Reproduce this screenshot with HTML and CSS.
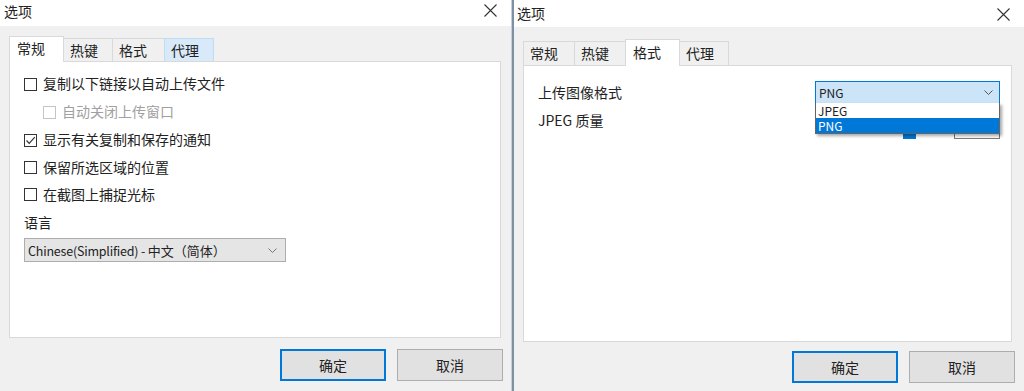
FILE: index.html
```
<!DOCTYPE html>
<html lang="zh-CN">
<head>
    <meta charset="UTF-8">
    <title>选项</title>
    <link rel="stylesheet" href="styles.css">
</head>
<body>
    <div class="dialog dialog-left">
        <div class="titlebar">
            <span class="title">选项</span>
            <svg class="close" width="13" height="13" viewBox="0 0 13 13"><path d="M0.5 0.5 L12.5 12.5 M12.5 0.5 L0.5 12.5" stroke="#333" stroke-width="1.1" fill="none"/></svg>
        </div>
        <div class="body">
            <div class="tabs">
                <div class="tab selected w54">常规</div>
                <div class="tab w49">热键</div>
                <div class="tab w52">格式</div>
                <div class="tab hover w49">代理</div>
            </div>
            <div class="panel">
                <div class="row">
                    <span class="checkbox"></span>
                    <span>复制以下链接以自动上传文件</span>
                </div>
                <div class="row indent disabled">
                    <span class="checkbox"></span>
                    <span>自动关闭上传窗口</span>
                </div>
                <div class="row">
                    <span class="checkbox">
                        <svg width="11" height="11" viewBox="0 0 11 11"><path d="M1.5 5.5 L4.2 8.3 L9.8 2.2" stroke="#333" stroke-width="1.2" fill="none"/></svg>
                    </span>
                    <span>显示有关复制和保存的通知</span>
                </div>
                <div class="row">
                    <span class="checkbox"></span>
                    <span>保留所选区域的位置</span>
                </div>
                <div class="row">
                    <span class="checkbox"></span>
                    <span>在截图上捕捉光标</span>
                </div>
                <div class="label">语言</div>
                <div class="combo combo-lang">
                    <span class="combo-text"><span class="latin">Chinese(Simplified) - </span>中文（简体）</span>
                    <svg class="chevron" width="9" height="5" viewBox="0 0 9 5"><path d="M0.5 0.5 L4.5 4.5 L8.5 0.5" stroke="#777" stroke-width="1" fill="none"/></svg>
                </div>
            </div>
            <div class="footer">
                <button class="btn btn-default">确定</button>
                <button class="btn">取消</button>
            </div>
        </div>
    </div>

    <div class="divider"></div>

    <div class="dialog dialog-right">
        <div class="titlebar">
            <span class="title">选项</span>
            <svg class="close" width="13" height="13" viewBox="0 0 13 13"><path d="M0.5 0.5 L12.5 12.5 M12.5 0.5 L0.5 12.5" stroke="#333" stroke-width="1.1" fill="none"/></svg>
        </div>
        <div class="body">
            <div class="tabs">
                <div class="tab w51">常规</div>
                <div class="tab w51">热键</div>
                <div class="tab selected w54">格式</div>
                <div class="tab w49">代理</div>
            </div>
            <div class="panel">
                <div class="field">
                    <span>上传图像格式</span>
                    <div class="combo combo-format">
                        <span class="combo-text">PNG</span>
                        <svg class="chevron" width="9" height="5" viewBox="0 0 9 5"><path d="M0.5 0.5 L4.5 4.5 L8.5 0.5" stroke="#555" stroke-width="1" fill="none"/></svg>
                        <div class="dropdown">
                            <div class="option">JPEG</div>
                            <div class="option active">PNG</div>
                        </div>
                    </div>
                </div>
                <div class="field field-quality">
                    <span class="field-label">JPEG 质量</span>
                    <div class="slider"><span class="thumb"></span></div>
                    <div class="textbox"></div>
                </div>
            </div>
            <div class="footer">
                <button class="btn btn-default">确定</button>
                <button class="btn">取消</button>
            </div>
        </div>
    </div>
</body>
</html>
```

FILE: styles.css
```
body {
    margin: 0;
    display: flex;
    width: 1024px;
    height: 391px;
    overflow: hidden;
    font-family: "Noto Sans CJK SC", sans-serif;
    font-size: 14px;
    color: #222;
    background-color: #f0f0f0;
}
.dialog {
    display: flex;
    flex-direction: column;
    background-color: #f0f0f0;
}
.dialog-left {
    width: 511px;
}
.dialog-right {
    width: 510px;
}
.divider {
    width: 2px;
    border-left: 1px solid #c8d0d7;
    background-color: #7d91a2;
}
.titlebar {
    display: flex;
    justify-content: space-between;
    align-items: flex-start;
    background-color: #fff;
    height: 26px;
    padding-left: 4px;
}
.title {
    line-height: 23px;
}
.close {
    margin: 4px 14px 0 0;
}
.dialog-right .titlebar {
    height: 27px;
    padding-left: 3px;
}
.dialog-right .title {
    line-height: 27px;
}
.dialog-right .close {
    margin-top: 8px;
}
.body {
    flex: 1;
    display: flex;
    flex-direction: column;
    padding: 10px 10px 0 9px;
}
.dialog-right .body {
    padding: 12px 12px 0 9px;
}

/* tabs */
.tabs {
    display: flex;
    align-items: flex-end;
    height: 25px;
    position: relative;
    z-index: 1;
}
.dialog-right .tabs {
    height: 26px;
}
.tab {
    box-sizing: border-box;
    height: 23px;
    border: 1px solid #d9d9d9;
    border-bottom: none;
    margin-left: -1px;
    padding: 0 0 1px 6px;
    background-color: #f0f0f0;
    display: flex;
    align-items: center;
    line-height: 1;
}
.tab:first-child {
    margin-left: 0;
}
.tab.selected {
    height: 26px;
    margin-bottom: -1px;
    padding: 0 0 3px 7px;
    background-color: #fff;
    position: relative;
    z-index: 2;
}
.dialog-right .tab.selected {
    height: 27px;
}
.dialog-right .tab {
    height: 24px;
}
.tab.hover {
    background-color: #d8eaf9;
    border-color: #c0dcf3;
}
.w49 { width: 50px; }
.w51 { width: 52px; }
.w52 { width: 53px; }
.w54 { width: 55px; }

/* panel */
.panel {
    box-sizing: border-box;
    height: 277px;
    background-color: #fff;
    border: 1px solid #d9d9d9;
    padding: 8px 14px 0;
}
.dialog-right .panel {
    padding: 15px 11px 0 14px;
}
.row {
    display: flex;
    align-items: center;
    height: 28px;
}
.row span:last-child {
    margin-top: -2px;
}
.row:nth-child(n+4) {
    height: 27px;
}
.checkbox {
    box-sizing: border-box;
    width: 13px;
    height: 13px;
    border: 1px solid #333;
    background-color: #fff;
    margin-right: 6px;
    display: flex;
    align-items: center;
    justify-content: center;
}
.indent {
    padding-left: 19px;
}
.disabled {
    color: #a0a0a0;
}
.disabled .checkbox {
    border-color: #c4c4c4;
}
.label {
    height: 20px;
    line-height: 18px;
    margin: 5px 0 5px;
}
.combo {
    box-sizing: border-box;
    display: flex;
    align-items: center;
    justify-content: space-between;
    position: relative;
}
.combo-lang {
    width: 262px;
    height: 24px;
    border: 1px solid #adadad;
    background-color: #e5e5e5;
    padding: 0 8px 0 3px;
    font-size: 13px;
}
.latin {
    font-size: 12.5px;
    letter-spacing: -0.2px;
}
.combo-format {
    width: 185px;
    height: 23px;
    border: 1px solid #0078d7;
    background-color: #cce4f7;
    padding: 0 6px 0 3px;
    font-size: 12px;
}
.field {
    display: flex;
    align-items: center;
    justify-content: space-between;
    height: 23px;
}
.field > span {
    margin-top: -2px;
}
.field-quality {
    align-items: flex-end;
    height: 26px;
    margin-top: 9px;
}
.field-quality .field-label {
    align-self: flex-start;
    line-height: 18px;
}
.dropdown {
    position: absolute;
    top: 100%;
    left: -1px;
    right: -1px;
    background-color: #fff;
    border: 1px solid #646464;
    border-top: none;
    box-shadow: 2px 2px 3px rgba(0, 0, 0, 0.35);
    z-index: 5;
}
.option {
    height: 15px;
    line-height: 15px;
    padding-left: 2px;
    font-size: 12px;
}
.option.active {
    background-color: #0078d7;
    color: #fff;
}
.slider {
    flex: 1;
    display: flex;
    justify-content: flex-end;
    align-items: flex-end;
    height: 26px;
    padding-right: 38px;
}
.thumb {
    width: 13px;
    height: 21px;
    background-color: #0078d7;
}
.textbox {
    box-sizing: border-box;
    width: 46px;
    height: 23px;
    border: 1px solid #7a7a7a;
    background-color: #fff;
}

/* buttons */
.footer {
    display: flex;
    justify-content: flex-end;
    gap: 11px;
    margin-top: 11px;
    margin-right: -2px;
}
.dialog-right .footer {
    margin-top: 9px;
    margin-right: -3px;
}
.btn {
    box-sizing: border-box;
    width: 106px;
    height: 32px;
    font-family: "Noto Sans CJK SC", sans-serif;
    font-size: 14px;
    color: #222;
    background-color: #e1e1e1;
    border: 1px solid #adadad;
    padding: 0;
}
.btn-default {
    border: 2px solid #0078d7;
}
```
